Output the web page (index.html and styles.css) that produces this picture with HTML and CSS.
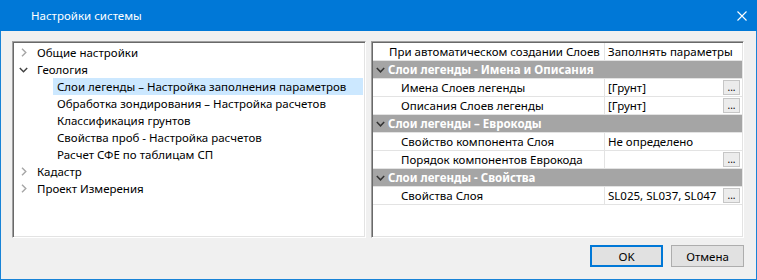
FILE: index.html
```html
<!DOCTYPE html>
<html lang="ru">
<head>
    <meta charset="UTF-8">
    <title>Настройки системы</title>
    <link rel="stylesheet" href="styles.css">
</head>
<body>
    <div class="window">
        <div class="titlebar">
            <span class="title">Настройки системы</span>
            <span class="close">
                <svg width="10" height="10" viewBox="0 0 10 10"><path d="M0.5 0.5 L9.5 9.5 M9.5 0.5 L0.5 9.5" stroke="#fff" stroke-width="1.1" fill="none"/></svg>
            </span>
        </div>
        <div class="content">
            <div class="panels">
                <!-- Tree of settings pages -->
                <div class="tree">
                    <div class="node"><span class="arrow"><svg width="6" height="9" viewBox="0 0 6 9"><path d="M1 0.8 L4.8 4.5 L1 8.2" stroke="#a6a6a6" stroke-width="1.4" fill="none"/></svg></span>Общие настройки</div>
                    <div class="node"><span class="arrow open"><svg width="9" height="6" viewBox="0 0 9 6"><path d="M0.8 1 L4.5 4.8 L8.2 1" stroke="#404040" stroke-width="1.4" fill="none"/></svg></span>Геология</div>
                    <div class="node child selected">Слои легенды – Настройка заполнения параметров</div>
                    <div class="node child">Обработка зондирования – Настройка расчетов</div>
                    <div class="node child">Классификация грунтов</div>
                    <div class="node child">Свойства проб - Настройка расчетов</div>
                    <div class="node child">Расчет СФЕ по таблицам СП</div>
                    <div class="node"><span class="arrow"><svg width="6" height="9" viewBox="0 0 6 9"><path d="M1 0.8 L4.8 4.5 L1 8.2" stroke="#a6a6a6" stroke-width="1.4" fill="none"/></svg></span>Кадастр</div>
                    <div class="node"><span class="arrow"><svg width="6" height="9" viewBox="0 0 6 9"><path d="M1 0.8 L4.8 4.5 L1 8.2" stroke="#a6a6a6" stroke-width="1.4" fill="none"/></svg></span>Проект Измерения</div>
                </div>

                <!-- Property grid -->
                <div class="grid">
                    <div class="row head">
                        <div class="name">При автоматическом создании Слоев</div>
                        <div class="value">Заполнять параметры</div>
                    </div>
                    <div class="row cat"><span class="cat-arrow"><svg width="9" height="6" viewBox="0 0 9 6"><path d="M0.8 1 L4.5 4.8 L8.2 1" stroke="#333" stroke-width="1.5" fill="none"/></svg></span>Слои легенды - Имена и Описания</div>
                    <div class="row prop">
                        <div class="name">Имена Слоев легенды</div>
                        <div class="value">[Грунт]<span class="dots">...</span></div>
                    </div>
                    <div class="row prop">
                        <div class="name">Описания Слоев легенды</div>
                        <div class="value">[Грунт]<span class="dots">...</span></div>
                    </div>
                    <div class="row cat"><span class="cat-arrow"><svg width="9" height="6" viewBox="0 0 9 6"><path d="M0.8 1 L4.5 4.8 L8.2 1" stroke="#333" stroke-width="1.5" fill="none"/></svg></span>Слои легенды – Еврокоды</div>
                    <div class="row prop">
                        <div class="name">Свойство компонента Слоя</div>
                        <div class="value">Не определено</div>
                    </div>
                    <div class="row prop">
                        <div class="name">Порядок компонентов Еврокода</div>
                        <div class="value"><span class="dots">...</span></div>
                    </div>
                    <div class="row cat"><span class="cat-arrow"><svg width="9" height="6" viewBox="0 0 9 6"><path d="M0.8 1 L4.5 4.8 L8.2 1" stroke="#333" stroke-width="1.5" fill="none"/></svg></span>Слои легенды - Свойства</div>
                    <div class="row prop">
                        <div class="name">Свойства Слоя</div>
                        <div class="value">SL025, SL037, SL047<span class="dots">...</span></div>
                    </div>
                </div>
            </div>

            <div class="buttons">
                <button class="btn default">OK</button>
                <button class="btn">Отмена</button>
            </div>
        </div>
    </div>
</body>
</html>
```

FILE: styles.css
```css
/* General */
body {
    margin: 0;
    font-family: "Noto Sans", "Open Sans", sans-serif;
    font-size: 11.5px;
    color: #000;
}

.window {
    width: 757px;
    height: 280px;
    box-sizing: border-box;
    border: 1px solid #1883d7;
    border-top: none;
    background-color: #f0f0f0;
    display: flex;
    flex-direction: column;
}

/* Title bar */
.titlebar {
    height: 31px;
    margin: 0 -1px;
    background-color: #0078d7;
    color: #fff;
    display: flex;
    align-items: center;
    padding-left: 31px;
    padding-right: 10px;
}

.close {
    margin-left: auto;
    display: flex;
}

.content {
    padding: 10px 12px 0 11px;
}

.panels {
    display: flex;
    gap: 5px;
    height: 197px;
}

/* Tree */
.tree {
    width: 354px;
    box-sizing: border-box;
    background-color: #fff;
    border: 1px solid;
    border-color: #a0a0a0 #fff #fff #a0a0a0;
    box-shadow: inset 1px 1px #696969, inset -1px -1px #e3e3e3;
    padding: 2px 2px 0 1px;
}

.node {
    height: 17px;
    line-height: 17px;
    padding-left: 7px;
    display: flex;
    align-items: center;
    white-space: nowrap;
}

.arrow {
    width: 16px;
    display: flex;
    align-items: center;
}

.arrow.open {
    margin-left: -2px;
    width: 18px;
}

.node.child {
    margin-left: 39px;
    padding-left: 4px;
}

.node.selected {
    background-color: #cce8ff;
}

/* Property grid */
.grid {
    flex: 1;
    box-sizing: border-box;
    background-color: #fff;
    border: 1px solid;
    border-color: #a0a0a0 #fff #fff #a0a0a0;
    box-shadow: inset 1px 1px #696969, inset -1px -1px #e3e3e3;
    padding: 1px;
}

.row {
    height: 17px;
    line-height: 17px;
    border-bottom: 1px solid #e3e3e3;
    display: flex;
    white-space: nowrap;
}

.row .name {
    width: 231px;
    border-right: 1px solid #e3e3e3;
    flex-shrink: 0;
    overflow: hidden;
}

.row.head .name {
    padding-left: 16px;
    width: 215px;
}

.row.prop .name {
    padding-left: 28px;
    width: 203px;
}

.row .value {
    flex: 1;
    padding-left: 3px;
    display: flex;
    align-items: center;
}

.row.cat {
    background-color: #a5a5a5;
    color: #fff;
    font-weight: bold;
    padding-left: 3px;
    align-items: center;
}

.cat-arrow {
    width: 12px;
    display: flex;
}

.dots {
    margin-left: auto;
    margin-right: 2px;
    width: 15px;
    height: 13px;
    border: 1px solid #c6c6c6;
    background-color: #ececec;
    font-size: 10px;
    line-height: 12px;
    text-align: center;
    color: #000;
}

/* Buttons */
.buttons {
    display: flex;
    justify-content: flex-end;
    gap: 8px;
    margin-top: 7px;
}

.btn {
    width: 73px;
    height: 22px;
    box-sizing: border-box;
    border: 1px solid #adadad;
    background-color: #e1e1e1;
    font-family: "Noto Sans", "Open Sans", sans-serif;
    font-size: 11.5px;
    padding: 0;
    color: #000;
}

.btn.default {
    border: 2px solid #0078d7;
}
```
